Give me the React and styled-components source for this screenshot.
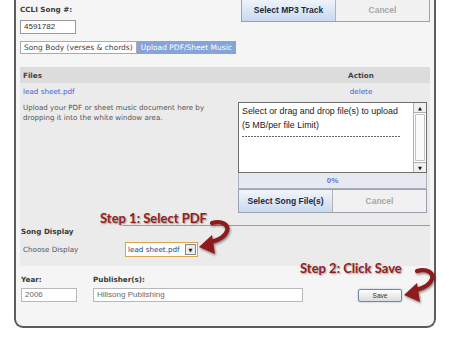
import React from "react";
import styled, { createGlobalStyle } from "styled-components";

const GlobalStyle = createGlobalStyle`
  body {
    margin: 0;
    background: #fff;
    font-family: "DejaVu Sans", Verdana, sans-serif;
  }
`;

const Arrow = ({ left, top }) => (
  <ArrowWrap left={left} top={top}>
    <svg width="36" height="40" viewBox="0 0 36 40">
      <defs>
        <filter id={`sh${left}`} x="-30%" y="-30%" width="160%" height="160%">
          <feDropShadow dx="1" dy="1.5" stdDeviation="1" floodColor="#000" floodOpacity="0.45" />
        </filter>
      </defs>
      <g filter={`url(#sh${left})`} fill="#8e1a1a">
        <path
          d="M15 5 C25 2 32 7 30 13 C28 19 22 22 14 24"
          stroke="#8e1a1a"
          strokeWidth="4.2"
          fill="none"
          strokeLinecap="round"
        />
        <polygon points="2,29 15,17 18,36" />
      </g>
    </svg>
  </ArrowWrap>
);

export default function App() {
  return (
    <>
      <GlobalStyle />
      <Frame>
        <TopRow>
          <LeftCol>
            <Label>CCLI Song #:</Label>
            <TextInput width={56}>4591782</TextInput>
            <Tabs>
              <Tab>Song Body (verses &amp; chords)</Tab>
              <Tab active>Upload PDF/Sheet Music</Tab>
            </Tabs>
          </LeftCol>
          <ButtonGroup top={-3} height={25}>
            <UiButton primary>Select MP3 Track</UiButton>
            <UiButton>Cancel</UiButton>
          </ButtonGroup>
        </TopRow>

        <Panel>
          <Header>
            <HeadCell>Files</HeadCell>
            <ActionCell bold>Action</ActionCell>
          </Header>
          <FileRow>
            <Link>lead sheet.pdf</Link>
            <ActionCell>
              <Link>delete</Link>
            </ActionCell>
          </FileRow>
          <Content>
            <Desc>
              Upload your PDF or sheet music document here by
              <br />
              dropping it into the white window area.
            </Desc>
            <Uploader>
              <DropBox>
                <DropText>
                  Select or drag and drop file(s) to upload
                  <br />
                  (5 MB/per file Limit)
                  <Dashes />
                </DropText>
                <Scrollbar>
                  <ScrollBtn>&#9650;</ScrollBtn>
                  <ScrollTrack />
                  <ScrollBtn>&#9660;</ScrollBtn>
                </Scrollbar>
              </DropBox>
              <Progress>0%</Progress>
              <ButtonGroup height={24}>
                <UiButton primary>Select Song File(s)</UiButton>
                <UiButton>Cancel</UiButton>
              </ButtonGroup>
            </Uploader>
          </Content>
          <Separator />
          <SectionTitle>Song Display</SectionTitle>
          <ChooseRow>
            <ChooseLabel>Choose Display</ChooseLabel>
            <Select>
              <SelectText>lead sheet.pdf</SelectText>
              <SelectBtn>&#9660;</SelectBtn>
            </Select>
          </ChooseRow>
        </Panel>

        <Fields>
          <Field>
            <Label>Year:</Label>
            <TextInput width={56} muted>2006</TextInput>
          </Field>
          <Field>
            <Label>Publisher(s):</Label>
            <TextInput width={210} muted>Hillsong Publishing</TextInput>
          </Field>
          <SaveButton>Save</SaveButton>
        </Fields>

        <StepLabel left={84} top={210}>Step 1: Select PDF</StepLabel>
        <Arrow left={181} top={218} />
        <StepLabel left={284} top={260}>Step 2: Click Save</StepLabel>
        <Arrow left={386} top={266} />
      </Frame>
    </>
  );
}

const Frame = styled.div`
  position: relative;
  box-sizing: border-box;
  margin-left: 14px;
  width: 422px;
  height: 328px;
  padding: 0 4px;
  background: #f5f5f5;
  border: 2px solid #5c5c5c;
  border-top: none;
  border-radius: 0 0 9px 9px;
`;

const TopRow = styled.div`
  display: flex;
  justify-content: space-between;
  align-items: flex-start;
`;

const LeftCol = styled.div`
  display: flex;
  flex-direction: column;
  align-items: flex-start;
  padding-top: 5px;
  gap: 6px;
`;

const Label = styled.div`
  font-size: 7.2px;
  font-weight: bold;
  line-height: 9px;
  color: #3a3a3a;
`;

const TextInput = styled.div`
  box-sizing: border-box;
  width: ${({ width }) => width}px;
  height: 14px;
  padding: 0 3px;
  background: #fff;
  border: 1px solid ${({ muted }) => (muted ? "#b8b8b8" : "#9a9a9a")};
  font-family: "Liberation Sans", Arial, sans-serif;
  font-size: 8px;
  line-height: 12px;
  color: ${({ muted }) => (muted ? "#6a6a6a" : "#333")};
`;

const Tabs = styled.div`
  display: flex;
  margin-top: 1px;
`;

const Tab = styled.div`
  box-sizing: border-box;
  height: 13px;
  padding: 0 3px;
  font-size: 7.5px;
  line-height: 11px;
  white-space: nowrap;
  color: ${({ active }) => (active ? "#fff" : "#444")};
  background: ${({ active }) => (active ? "#86a4d8" : "#fff")};
  border: 1px solid ${({ active }) => (active ? "#86a4d8" : "#aaa")};
`;

const ButtonGroup = styled.div`
  display: flex;
  box-sizing: border-box;
  width: 189px;
  height: ${({ height }) => height}px;
  margin-top: ${({ top }) => top || 0}px;
  border: 1px solid #9aa3ad;
`;

const UiButton = styled.div`
  flex: 1;
  display: flex;
  align-items: center;
  justify-content: center;
  font-family: "Liberation Sans", Arial, sans-serif;
  font-size: 8.5px;
  font-weight: bold;
  color: ${({ primary }) => (primary ? "#1e2a3a" : "#a8a8a8")};
  background: ${({ primary }) =>
    primary ? "linear-gradient(#f2f6fc, #c9d9ef)" : "#f1f1f1"};
  border-left: ${({ primary }) => (primary ? "none" : "1px solid #b4b4b4")};
`;

const Panel = styled.div`
  margin-top: 13px;
  padding-bottom: 9px;
  background: #ebebeb;
`;

const Header = styled.div`
  display: flex;
  align-items: center;
  height: 16px;
  padding-left: 3px;
  padding-right: 39px;
  background: #dcdcdc;
`;

const HeadCell = styled.div`
  flex: 1;
  font-size: 7.2px;
  font-weight: bold;
  color: #444;
`;

const ActionCell = styled.div`
  width: 60px;
  text-align: center;
  font-size: 7.2px;
  font-weight: ${({ bold }) => (bold ? "bold" : "normal")};
  color: #444;
`;

const FileRow = styled.div`
  display: flex;
  justify-content: space-between;
  align-items: center;
  height: 12px;
  margin-top: 2px;
  padding-left: 3px;
  padding-right: 39px;
`;

const Link = styled.span`
  font-size: 7.2px;
  color: #3d5fd6;
`;

const Content = styled.div`
  display: flex;
  margin-top: 5px;
  padding: 0 3px;
`;

const Desc = styled.div`
  flex: 1;
  padding-top: 1px;
  font-size: 7.1px;
  line-height: 10px;
  color: #555;
`;

const Uploader = styled.div`
  display: flex;
  flex-direction: column;
  width: 189px;
`;

const DropBox = styled.div`
  display: flex;
  box-sizing: border-box;
  height: 71px;
  background: #fff;
  border: 1px solid #6e6e6e;
`;

const DropText = styled.div`
  flex: 1;
  padding: 1px 3px;
  font-family: "Liberation Sans", Arial, sans-serif;
  font-size: 8.9px;
  line-height: 14px;
  color: #222;
`;

const Dashes = styled.div`
  width: 158px;
  height: 1px;
  margin-top: 4px;
  background: repeating-linear-gradient(90deg, #666 0 2px, transparent 2px 3px);
`;

const Scrollbar = styled.div`
  display: flex;
  flex-direction: column;
  width: 12px;
  border-left: 1px solid #b0b0b0;
`;

const ScrollBtn = styled.div`
  height: 9px;
  display: flex;
  align-items: center;
  justify-content: center;
  font-size: 5px;
  color: #111;
  background: #f0f0f0;
  border-bottom: 1px solid #b0b0b0;
  &:last-child {
    border-bottom: none;
    border-top: 1px solid #b0b0b0;
  }
`;

const ScrollTrack = styled.div`
  flex: 1;
  margin: 1px 1px;
  border: 1px solid #c4c4c4;
  background: #fbfbfb;
`;

const Progress = styled.div`
  box-sizing: border-box;
  height: 16px;
  display: flex;
  align-items: center;
  justify-content: center;
  font-family: "Liberation Sans", Arial, sans-serif;
  font-size: 8px;
  font-weight: bold;
  color: #5b7bd0;
  background: #e6eaf0;
  border: 1px solid #a9b2bd;
  border-top: none;
`;

const Separator = styled.div`
  height: 1px;
  margin: 12px 0 0 103px;
  background: #9d9d9d;
`;

const SectionTitle = styled.div`
  padding-left: 1px;
  font-size: 7.2px;
  font-weight: bold;
  line-height: 11px;
  color: #3a3a3a;
`;

const ChooseRow = styled.div`
  display: flex;
  align-items: center;
  height: 15px;
  margin-top: 5px;
  padding-left: 3px;
`;

const ChooseLabel = styled.div`
  width: 102px;
  font-size: 7.2px;
  color: #555;
`;

const Select = styled.div`
  display: flex;
  align-items: center;
  box-sizing: border-box;
  width: 73px;
  height: 15px;
  padding: 1px;
  background: #fff;
  border: 1px solid #d9a64e;
`;

const SelectText = styled.div`
  flex: 1;
  padding-left: 1px;
  font-size: 7.2px;
  color: #27437e;
`;

const SelectBtn = styled.div`
  box-sizing: border-box;
  width: 11px;
  height: 11px;
  display: flex;
  align-items: center;
  justify-content: center;
  font-size: 5px;
  color: #111;
  background: #ececec;
  border: 1px solid #888;
`;

const Fields = styled.div`
  display: flex;
  align-items: flex-end;
  margin-top: 9px;
  padding-left: 1px;
  gap: 16px;
`;

const Field = styled.div`
  display: flex;
  flex-direction: column;
  gap: 4px;
`;

const SaveButton = styled.div`
  box-sizing: border-box;
  width: 44px;
  height: 13px;
  margin-left: 39px;
  display: flex;
  align-items: center;
  justify-content: center;
  font-family: "Liberation Sans", Arial, sans-serif;
  font-size: 6.5px;
  color: #333;
  background: linear-gradient(#fdfdfd, #dcdcdc);
  border: 1px solid #6f86ad;
  border-radius: 2px;
  box-shadow: 0 0 2px #9ab5de;
`;

const StepLabel = styled.div`
  position: absolute;
  left: ${({ left }) => left}px;
  top: ${({ top }) => top}px;
  font-family: Lato, "Open Sans", sans-serif;
  font-size: 13px;
  font-weight: bold;
  line-height: 16px;
  white-space: nowrap;
  color: #971d1d;
  text-shadow: 1px 1px 1.5px rgba(0, 0, 0, 0.35);
`;

const ArrowWrap = styled.div`
  position: absolute;
  left: ${({ left }) => left}px;
  top: ${({ top }) => top}px;
  width: 36px;
  height: 40px;
  svg {
    display: block;
  }
`;
